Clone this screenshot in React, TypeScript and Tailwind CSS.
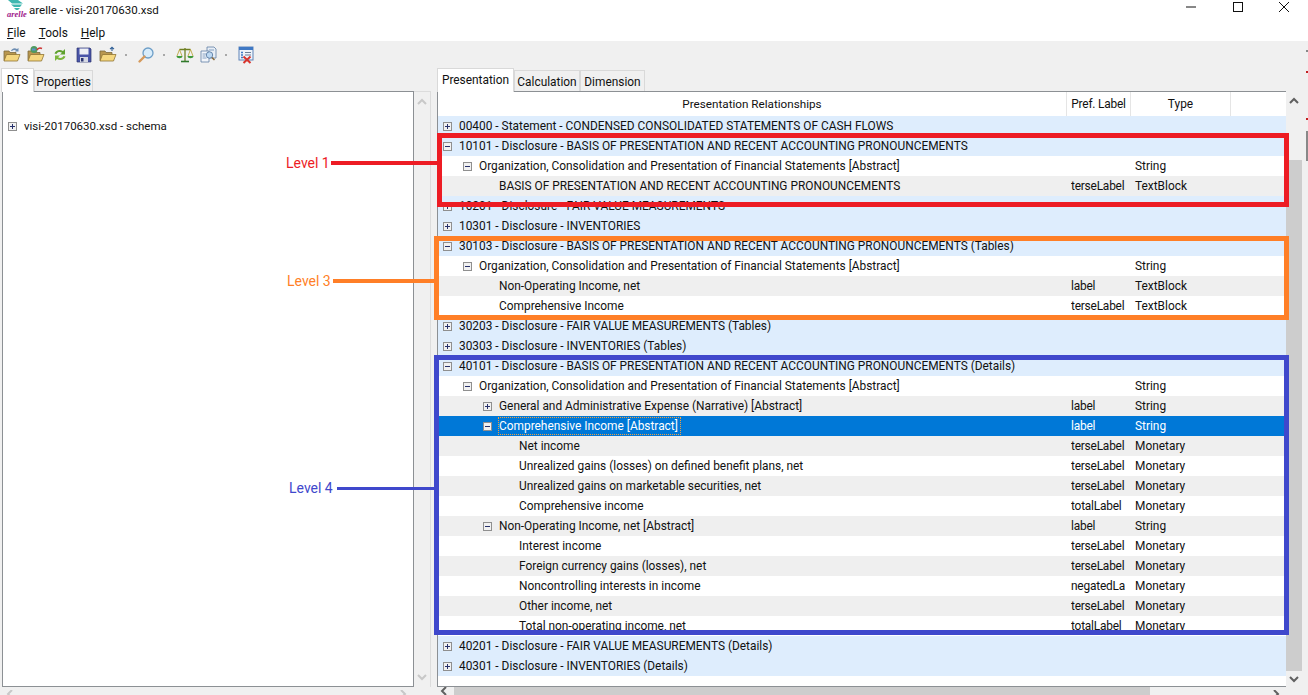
import React from 'react'

type Row = {
  level: number
  label: string
  box?: 'plus' | 'minus'
  pref?: string
  type?: string
  tone: 'blue' | 'white' | 'gray' | 'selected'
}

const rows: Row[] = [
  { level: 0, box: 'plus', tone: 'blue', label: '00400 - Statement - CONDENSED CONSOLIDATED STATEMENTS OF CASH FLOWS' },
  { level: 0, box: 'minus', tone: 'blue', label: '10101 - Disclosure - BASIS OF PRESENTATION AND RECENT ACCOUNTING PRONOUNCEMENTS' },
  { level: 1, box: 'minus', tone: 'white', label: 'Organization, Consolidation and Presentation of Financial Statements [Abstract]', type: 'String' },
  { level: 2, tone: 'gray', label: 'BASIS OF PRESENTATION AND RECENT ACCOUNTING PRONOUNCEMENTS', pref: 'terseLabel', type: 'TextBlock' },
  { level: 0, box: 'plus', tone: 'blue', label: '10201 - Disclosure - FAIR VALUE MEASUREMENTS' },
  { level: 0, box: 'plus', tone: 'blue', label: '10301 - Disclosure - INVENTORIES' },
  { level: 0, box: 'minus', tone: 'blue', label: '30103 - Disclosure - BASIS OF PRESENTATION AND RECENT ACCOUNTING PRONOUNCEMENTS (Tables)' },
  { level: 1, box: 'minus', tone: 'white', label: 'Organization, Consolidation and Presentation of Financial Statements [Abstract]', type: 'String' },
  { level: 2, tone: 'gray', label: 'Non-Operating Income, net', pref: 'label', type: 'TextBlock' },
  { level: 2, tone: 'white', label: 'Comprehensive Income', pref: 'terseLabel', type: 'TextBlock' },
  { level: 0, box: 'plus', tone: 'blue', label: '30203 - Disclosure - FAIR VALUE MEASUREMENTS (Tables)' },
  { level: 0, box: 'plus', tone: 'blue', label: '30303 - Disclosure - INVENTORIES (Tables)' },
  { level: 0, box: 'minus', tone: 'blue', label: '40101 - Disclosure - BASIS OF PRESENTATION AND RECENT ACCOUNTING PRONOUNCEMENTS (Details)' },
  { level: 1, box: 'minus', tone: 'white', label: 'Organization, Consolidation and Presentation of Financial Statements [Abstract]', type: 'String' },
  { level: 2, box: 'plus', tone: 'gray', label: 'General and Administrative Expense (Narrative) [Abstract]', pref: 'label', type: 'String' },
  { level: 2, box: 'minus', tone: 'selected', label: 'Comprehensive Income [Abstract]', pref: 'label', type: 'String' },
  { level: 3, tone: 'gray', label: 'Net income', pref: 'terseLabel', type: 'Monetary' },
  { level: 3, tone: 'white', label: 'Unrealized gains (losses) on defined benefit plans, net', pref: 'terseLabel', type: 'Monetary' },
  { level: 3, tone: 'gray', label: 'Unrealized gains on marketable securities, net', pref: 'terseLabel', type: 'Monetary' },
  { level: 3, tone: 'white', label: 'Comprehensive income', pref: 'totalLabel', type: 'Monetary' },
  { level: 2, box: 'minus', tone: 'gray', label: 'Non-Operating Income, net [Abstract]', pref: 'label', type: 'String' },
  { level: 3, tone: 'white', label: 'Interest income', pref: 'terseLabel', type: 'Monetary' },
  { level: 3, tone: 'gray', label: 'Foreign currency gains (losses), net', pref: 'terseLabel', type: 'Monetary' },
  { level: 3, tone: 'white', label: 'Noncontrolling interests in income', pref: 'negatedLabel', type: 'Monetary' },
  { level: 3, tone: 'gray', label: 'Other income, net', pref: 'terseLabel', type: 'Monetary' },
  { level: 3, tone: 'white', label: 'Total non-operating income, net', pref: 'totalLabel', type: 'Monetary' },
  { level: 0, box: 'plus', tone: 'blue', label: '40201 - Disclosure - FAIR VALUE MEASUREMENTS (Details)' },
  { level: 0, box: 'plus', tone: 'blue', label: '40301 - Disclosure - INVENTORIES (Details)' },
]

const toneClass = {
  blue: 'bg-[#deedfd] text-[#111]',
  white: 'bg-white text-[#111]',
  gray: 'bg-[#efefef] text-[#111]',
  selected: 'bg-[#0078d7] text-white',
}

const indentClass = ['pl-[5px]', 'pl-[25px]', 'pl-[45px]', 'pl-[65px]']

function TreeBox({ kind }: { kind: 'plus' | 'minus' }) {
  return (
    <svg width="9" height="9" viewBox="0 0 9 9" className="shrink-0">
      <rect x="0.5" y="0.5" width="8" height="8" fill="#f1f1f1" stroke="#8f8f8f" />
      <path d="M2 4.5h5" stroke="#26306b" />
      {kind === 'plus' && <path d="M4.5 2v5" stroke="#26306b" />}
    </svg>
  )
}

function Chevron({ dir, light }: { dir: 'up' | 'down' | 'left' | 'right'; light?: boolean }) {
  const d = {
    up: 'M1 6l4-4 4 4',
    down: 'M1 2l4 4 4-4',
    left: 'M6 0l-4 4 4 4',
    right: 'M2 0l4 4-4 4',
  }[dir]
  return (
    <svg width="10" height="8" viewBox="0 0 10 8" className="shrink-0">
      <path d={d} fill="none" stroke={light ? '#c8c8c8' : '#606060'} strokeWidth="2" />
    </svg>
  )
}

function Folder({ overlay }: { overlay?: React.ReactNode }) {
  return (
    <svg width="18" height="18" viewBox="0 0 18 18" className="shrink-0">
      <path d="M1 5h5l1 1.500h6v8H1z" fill="#b9974f" stroke="#7c6a3c" strokeWidth="0.8" />
      <path d="M3.500 8.500H17l-2.500 6.500H1z" fill="#f5d77f" stroke="#8f7433" strokeWidth="0.8" />
      {overlay}
    </svg>
  )
}

function Toolbar() {
  return (
    <div className="flex h-[27px] items-center bg-[#f0f0f0] pl-[3px]">
      <Folder overlay={<path d="M8 5c1-3 4-3.500 6-2l1.500-1v3.500H12l1-1c-1.500-1-3-.5-4 .5z" fill="#6f8fb3" />} />
      <span className="w-[6px]" />
      <Folder
        overlay={
          <>
            <circle cx="7" cy="3.500" r="3.500" fill="#4f9a5e" />
            <path d="M5 2.500h3.500v2H5z" fill="#5d8fd0" />
            <path d="M10 4c1-2 3-2.500 5-1.500" fill="none" stroke="#c33" strokeWidth="1.400" />
          </>
        }
      />
      <span className="w-[7px]" />
      <svg width="16" height="16" viewBox="0 0 16 16" className="shrink-0">
        <path d="M2.500 6.500C3.500 3 8 2 11 4l2-2v5.500H8l2-1.800C8 4.500 5.500 5 4.500 7z" fill="#5fa12e" />
        <path d="M13.500 9.500c-1 3.500-5.500 4.500-8.500 2.500l-2 2V8.500h5l-2 1.800c2 1.200 4.500.7 5.500-1.300z" fill="#7cb63d" />
      </svg>
      <span className="w-[8px]" />
      <svg width="16" height="16" viewBox="0 0 16 16" className="shrink-0">
        <path d="M1 1h13l1 1v13H1z" fill="#4a55a8" stroke="#2b3470" strokeWidth="0.7" />
        <rect x="3.500" y="1.500" width="9" height="6" fill="#eef0f5" />
        <rect x="4" y="10" width="8" height="5" fill="#d5d8e3" />
        <rect x="5" y="11" width="2.500" height="3.500" fill="#2b3470" />
      </svg>
      <span className="w-[7px]" />
      <Folder overlay={<path d="M13 5V1.500M11 3.200l2-2 2 2" fill="none" stroke="#2f5f96" strokeWidth="1.100" />} />
      <span className="ml-[8px] h-[2px] w-[2px] bg-[#a8a8a8]" />
      <span className="w-[10px]" />
      <svg width="18" height="18" viewBox="0 0 18 18" className="shrink-0">
        <circle cx="11" cy="7" r="5" fill="#d8ecfa" stroke="#6d9ec7" strokeWidth="1.300" />
        <path d="M7.500 10.500L2.500 15.500" stroke="#d69a5c" strokeWidth="2.400" strokeLinecap="round" />
      </svg>
      <span className="w-[8px]" />
      <span className="h-[2px] w-[2px] bg-[#a8a8a8]" />
      <span className="w-[11px]" />
      <svg width="18" height="18" viewBox="0 0 18 18" className="shrink-0">
        <path d="M9 2v13M3.500 3.500h11" stroke="#6f7f22" strokeWidth="1.300" />
        <path d="M3.500 3.500L1 10M3.500 3.500L6 10M14.500 3.500L12 10M14.500 3.500L17 10" stroke="#b59d2a" strokeWidth="0.8" />
        <path d="M0.500 10h6c0 3-6 3-6 0zM11.500 10h6c0 3-6 3-6 0z" fill="#3f9a3a" />
        <path d="M5 15.500h8" stroke="#2f7a2c" strokeWidth="1.600" />
      </svg>
      <span className="w-[5px]" />
      <svg width="18" height="18" viewBox="0 0 18 18" className="shrink-0">
        <path d="M8 1h7l2 2v9H8z" fill="#e8eef6" stroke="#5f7fa5" strokeWidth="0.8" />
        <path d="M2 5h8v11H2z" fill="#f2f5fa" stroke="#5f7fa5" strokeWidth="0.8" />
        <path d="M3.500 8h4M3.500 10h3M3.500 12h4M10 4h5" stroke="#6d8db5" strokeWidth="0.8" />
        <circle cx="10.500" cy="9" r="3.200" fill="#bcd8f2" stroke="#5f7fa5" strokeWidth="0.9" />
        <path d="M13 11.500l2.500 2.500" stroke="#8a6a3a" strokeWidth="1.500" />
      </svg>
      <span className="w-[8px]" />
      <span className="h-[2px] w-[2px] bg-[#a8a8a8]" />
      <span className="w-[11px]" />
      <svg width="16" height="18" viewBox="0 0 16 18" className="shrink-0">
        <rect x="1" y="1" width="14" height="13" fill="#eef3fa" stroke="#5f84b8" />
        <rect x="1" y="1" width="14" height="3" fill="#3f78c4" />
        <path d="M3 6.500h2M3 9h2M3 11.500h2" stroke="#3f78c4" strokeWidth="1.400" />
        <path d="M7 6.500h6M7 9h6" stroke="#6c7f99" />
        <path d="M5.500 10.500l7 6.500M12.500 10.500l-7 6.500" stroke="#d8332c" strokeWidth="2" />
      </svg>
    </div>
  )
}

function Tab({ label, active, width }: { label: string; active?: boolean; width: string }) {
  return active ? (
    <div className={`${width} z-10 -mb-px flex h-[24px] items-start justify-center border border-b-0 border-[#d9d9d9] bg-white pt-[3px]`}>
      {label}
    </div>
  ) : (
    <div className={`${width} flex h-[21px] items-start justify-center border border-b-0 border-[#d9d9d9] bg-[#f0f0f0] pt-[3px]`}>
      {label}
    </div>
  )
}

function Overlays() {
  return (
    <>
      <div className="absolute left-[437px] top-[133px] h-[74px] w-[852px] border-[5px] border-[#ed1c24]" />
      <div className="absolute left-[434px] top-[236px] h-[84px] w-[855px] border-[5px] border-[#ff7f27]" />
      <div className="absolute left-[434px] top-[355px] h-[280px] w-[855px] border-[5px] border-[#3f48cc]" />

      <span className="absolute left-[286px] top-[155px] text-[14px] leading-[16px] text-[#ed1c24]">Level 1</span>
      <div className="absolute left-[331px] top-[161px] h-[4px] w-[106px] bg-[#ed1c24]" />
      <span className="absolute left-[287px] top-[273px] text-[14px] leading-[16px] text-[#ff7f27]">Level 3</span>
      <div className="absolute left-[333px] top-[279px] h-[4px] w-[101px] bg-[#ff7f27]" />
      <span className="absolute left-[289px] top-[480px] text-[14px] leading-[16px] text-[#3f48cc]">Level 4</span>
      <div className="absolute left-[337px] top-[487px] h-[3px] w-[97px] bg-[#3f48cc]" />

      <div className="absolute left-[1306px] top-[50px] h-[2px] w-[2px] bg-[#888]" />
      <div className="absolute left-[1306px] top-[71px] h-[2px] w-[2px] bg-[#c02020]" />
      <div className="absolute left-[1306px] top-[118px] h-[2px] w-[2px] bg-[#c02020]" />
      <div className="absolute left-[1306px] top-[131px] h-[30px] w-[2px] bg-[#888]" />
    </>
  )
}

export default function App() {
  return (
    <div
      className="relative h-[695px] w-[1308px] overflow-hidden bg-[#f0f0f0] text-[11.9px] leading-[16px] text-[#111]"
      style={{ fontFamily: 'Roboto, "Noto Sans", sans-serif' }}
    >
      {/* title bar */}
      <div className="flex h-[20px] items-center bg-white">
        <div className="relative ml-[7px] h-[16px] w-[18px] shrink-0 -translate-y-[2px]">
          <svg width="18" height="11" viewBox="0 0 18 11" className="block">
            <path d="M1 0h10l5 3.500H5zM4 4.500h11L13 7H7zM7 8h6l-2 2H9z" fill="#3fb7b0" />
          </svg>
          <span className="absolute left-0 top-[10px] font-['Liberation_Serif'] text-[8.5px] font-bold italic leading-[8px] text-[#a01a8c]">arelle</span>
        </div>
        <span className="ml-[4px] text-[11.5px]">arelle - visi-20170630.xsd</span>
        <div className="-mt-[6px] ml-auto flex items-center">
          <svg width="12" height="12" viewBox="0 0 12 12" className="mr-[35px]">
            <path d="M1 6h10" stroke="#111" />
          </svg>
          <svg width="12" height="12" viewBox="0 0 12 12" className="mr-[34px]">
            <rect x="1.500" y="1.500" width="9" height="9" fill="none" stroke="#111" />
          </svg>
          <svg width="12" height="12" viewBox="0 0 12 12" className="mr-[18px]">
            <path d="M1 1l10 10M11 1L1 11" stroke="#111" />
          </svg>
        </div>
      </div>

      {/* menu */}
      <div className="flex h-[21px] items-center gap-[13px] bg-white pl-[7px] pt-[5px]">
        <span><u>F</u>ile</span>
        <span><u>T</u>ools</span>
        <span><u>H</u>elp</span>
      </div>

      <Toolbar />

      <div className="flex h-[627px]">
        {/* left pane */}
        <div className="w-[437px] shrink-0">
          <div className="flex h-[23px] items-end pl-px">
            <Tab label="DTS" active width="w-[33px]" />
            <Tab label="Properties" width="w-[59px]" />
          </div>
          <div className="ml-[2px] flex h-[596px]">
            <div className="h-full w-[412px] border border-[#8c9094] bg-white pt-[26px]">
              <div className="flex h-[16px] items-center pl-[5px]">
                <TreeBox kind="plus" />
                <span className="ml-[7px] text-[11.5px]">visi-20170630.xsd - schema</span>
              </div>
            </div>
            <div className="flex h-full w-[17px] flex-col items-center justify-between border-r border-t border-[#dcdcdc] py-[6px]">
              <Chevron dir="up" light />
              <Chevron dir="down" light />
            </div>
          </div>
          <div className="flex h-[8px] items-start justify-between pl-[6px] pr-[28px] pt-[3px]">
            <Chevron dir="left" light />
            <Chevron dir="right" light />
          </div>
        </div>

        {/* right pane */}
        <div className="w-[871px]">
          <div className="flex h-[23px] items-end">
            <Tab label="Presentation" active width="w-[77px]" />
            <Tab label="Calculation" width="w-[66px]" />
            <Tab label="Dimension" width="w-[65px]" />
          </div>
          <div className="flex h-[596px]">
            <div className="h-full w-[849px] border border-r-0 border-[#8c9094] bg-white">
              <div className="flex h-[24px] items-center">
                <div className="w-[629px] border-r border-[#e5e5e5] text-center text-[11.7px] leading-[24px]">Presentation Relationships</div>
                <div className="w-[64px] border-r border-[#e5e5e5] text-center leading-[24px] tracking-[-0.2px]">Pref. Label</div>
                <div className="w-[100px] border-r border-[#e5e5e5] text-center leading-[24px]">Type</div>
              </div>
              {rows.map((row, i) => (
                <div key={i} className={`flex h-[20px] items-center ${toneClass[row.tone]}`}>
                  <div className={`flex w-[629px] items-center ${indentClass[row.level]}`}>
                    {row.box ? <TreeBox kind={row.box} /> : <span className="w-[9px] shrink-0" />}
                    <span
                      className={`ml-[7px] whitespace-nowrap ${
                        row.tone === 'selected' ? 'pr-[2px] outline-1 outline-offset-0 outline-dotted outline-[#f0a040]' : ''
                      }`}
                    >
                      {row.label}
                    </span>
                  </div>
                  <div className="ml-[4px] mr-[6px] w-[54px] overflow-hidden whitespace-nowrap tracking-[-0.2px]">{row.pref}</div>
                  <div className="w-[100px] pl-[4px]">{row.type}</div>
                </div>
              ))}
            </div>
            <div className="relative flex h-full w-[16px] flex-col items-center justify-between pb-[4px] pt-[6px]">
              <Chevron dir="up" />
              <div className="absolute bottom-[16px] left-0 right-0 top-[69px] bg-[#cdcdcd]" />
              <Chevron dir="down" />
            </div>
          </div>
          <div className="flex h-[8px] w-[849px] items-start pl-[3px]">
            <Chevron dir="left" />
            <div className="ml-[4px] h-full w-[696px] bg-[#cdcdcd]" />
            <div className="ml-[122px] pt-[3px]">
              <Chevron dir="right" />
            </div>
          </div>
        </div>
      </div>

      <Overlays />
    </div>
  )
}
